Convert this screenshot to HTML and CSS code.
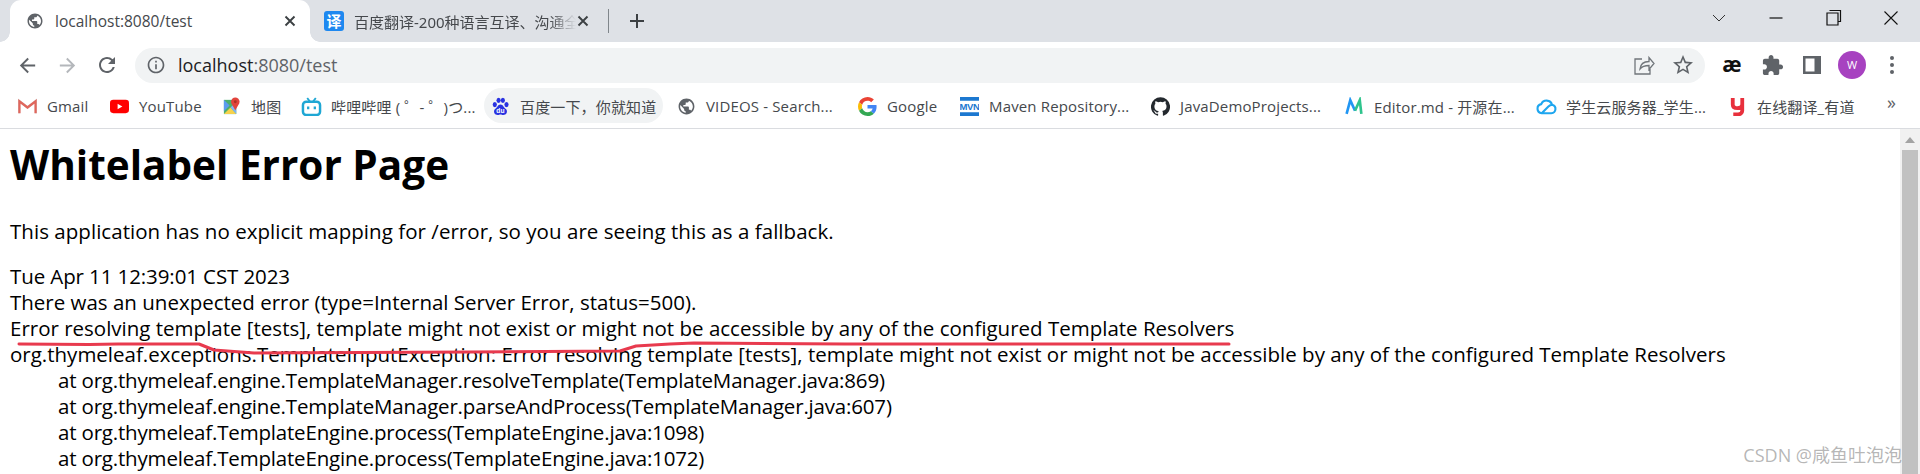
FILE: index.html
```html
<!DOCTYPE html>
<html lang="en">
<head>
<meta charset="utf-8">
<title>localhost:8080/test</title>
<link rel="stylesheet" href="styles.css">
</head>
<body>
<svg class="defs" width="0" height="0" aria-hidden="true">
  <symbol id="globe" viewBox="0 0 24 24"><path d="M12 2C6.48 2 2 6.48 2 12s4.48 10 10 10 10-4.48 10-10S17.52 2 12 2zm-1 17.93c-3.95-.49-7-3.85-7-7.93 0-.62.08-1.21.21-1.79L9 15v1c0 1.1.9 2 2 2v1.93zm6.9-2.54c-.26-.81-1-1.39-1.9-1.39h-1v-3c0-.55-.45-1-1-1H8v-2h2c.55 0 1-.45 1-1V7h2c1.1 0 2-.9 2-2v-.41c2.93 1.19 5 4.06 5 7.41 0 2.08-.8 3.97-2.1 5.39z"/></symbol>
  <symbol id="x" viewBox="0 0 14 14"><path d="M2.5 2.5l9 9M11.500 2.500l-9 9" fill="none" stroke="#3c4043" stroke-width="1.900"/></symbol>
</svg>
<div class="browser">
  <header class="tabstrip">
    <div class="tab tab-active">
      <svg class="fav-globe"><use href="#globe"/></svg>
      <span class="tab-title">localhost:8080/test</span>
      <svg class="tab-x"><use href="#x"/></svg>
    </div>
    <div class="tab tab-idle">
      <span class="fav-yi">译</span>
      <span class="tab-title tab-fade">百度翻译-200种语言互译、沟通全世界！</span>
      <svg class="tab-x"><use href="#x"/></svg>
    </div>
    <span class="tab-sep"></span>
    <svg class="tab-plus" viewBox="0 0 16 16"><path d="M8 1v14M1 8h14" stroke="#3c4043" stroke-width="2" fill="none"/></svg>
    <div class="caption">
      <span class="cap-btn"><svg width="16" height="16" viewBox="0 0 16 16"><path d="M2 5l6 6 6-6" fill="none" stroke="#333" stroke-width="1"/></svg></span>
      <span class="cap-btn"><svg width="16" height="16" viewBox="0 0 16 16"><path d="M1.500 8h13" stroke="#111" stroke-width="1.200"/></svg></span>
      <span class="cap-btn"><svg width="16" height="16" viewBox="0 0 16 16"><path d="M3.500 .5h11v11h-2M1 3h11v12H1z" fill="none" stroke="#111" stroke-width="1.200"/></svg></span>
      <span class="cap-btn"><svg width="16" height="16" viewBox="0 0 16 16"><path d="M1.500 1.500l13 13M14.500 1.500l-13 13" stroke="#111" stroke-width="1.100"/></svg></span>
    </div>
  </header>

  <nav class="toolbar">
    <span class="slot"><svg class="ico22 grey" viewBox="0 0 24 24"><path d="M20 11H7.830l5.590-5.590L12 4l-8 8 8 8 1.410-1.410L7.830 13H20v-2z"/></svg></span>
    <span class="slot"><svg class="ico22 pale" viewBox="0 0 24 24"><path d="M4 11h12.170l-5.590-5.590L12 4l8 8-8 8-1.410-1.410L16.170 13H4v-2z"/></svg></span>
    <span class="slot"><svg class="ico24 grey" viewBox="0 0 24 24"><path d="M17.650 6.350A7.958 7.958 0 0 0 12 4c-4.420 0-7.990 3.580-7.990 8s3.570 8 7.990 8c3.730 0 6.840-2.550 7.730-6h-2.080A5.990 5.990 0 0 1 12 18c-3.310 0-6-2.690-6-6s2.690-6 6-6c1.660 0 3.140.69 4.220 1.780L13 11h7V4l-2.350 2.350z"/></svg></span>
    <div class="omnibox">
      <svg class="ico18 grey" viewBox="0 0 24 24"><path d="M11 7h2v2h-2zm0 4h2v6h-2zm1-9C6.480 2 2 6.480 2 12s4.480 10 10 10 10-4.480 10-10S17.520 2 12 2zm0 18c-4.410 0-8-3.590-8-8s3.590-8 8-8 8 3.590 8 8-3.590 8-8 8z"/></svg>
      <span class="url"><span class="url-host">localhost</span>:8080/test</span>
      <span class="omni-right">
        <span class="slot-s"><svg width="22" height="22" viewBox="0 0 22 22"><path d="M9 5H2v15h15v-6M7 15c.5-5 4-7.500 9-7.500V3.500l5 6-5 6v-4c-4 0-7 1-9 3.500z" fill="none" stroke="#70757a" stroke-width="1.300"/></svg></span>
        <span class="slot-s"><svg class="ico24 grey" viewBox="0 0 24 24"><path d="M22 9.240l-7.190-.62L12 2 9.190 8.630 2 9.240l5.460 4.730L5.820 21 12 17.270 18.180 21l-1.630-7.030L22 9.240zM12 15.400l-3.760 2.270 1-4.280-3.320-2.880 4.380-.38L12 6.100l1.710 4.040 4.380.38-3.320 2.880 1 4.280L12 15.400z"/></svg></span>
      </span>
    </div>
    <span class="slot ae">æ</span>
    <span class="slot"><svg class="ico22 grey" viewBox="0 0 24 24"><path d="M20.500 11H19V7c0-1.100-.9-2-2-2h-4V3.500C13 2.120 11.880 1 10.500 1S8 2.120 8 3.500V5H4c-1.100 0-1.990.9-1.990 2v3.800H3.500c1.490 0 2.700 1.210 2.700 2.700s-1.210 2.700-2.700 2.700H2V20c0 1.100.9 2 2 2h3.800v-1.500c0-1.490 1.210-2.700 2.700-2.700 1.490 0 2.700 1.210 2.700 2.700V22H17c1.100 0 2-.9 2-2v-4h1.500c1.380 0 2.500-1.120 2.500-2.500S21.880 11 20.500 11z"/></svg></span>
    <span class="slot"><svg width="18" height="18" viewBox="0 0 18 18"><path fill="#5f6368" d="M0 0h18v18H0z"/><path fill="#fff" d="M2.500 2.500h9v13h-9z"/></svg></span>
    <span class="slot"><span class="avatar">W</span></span>
    <span class="slot"><svg width="6" height="20" viewBox="0 0 6 20"><circle cx="3" cy="3" r="2" fill="#5f6368"/><circle cx="3" cy="10" r="2" fill="#5f6368"/><circle cx="3" cy="17" r="2" fill="#5f6368"/></svg></span>
  </nav>

  <nav class="bookmarks">
    <a class="bm"><svg class="bm-ico" viewBox="0 0 20 16"><path d="M1 15V2l9 7 9-7v13" fill="none" stroke="#d6d6d6" stroke-width="2.600"/><path d="M1.500 15V2.500L10 9l8.500-6.500V15" fill="none" stroke="#e0665c" stroke-width="2.400"/></svg>Gmail</a>
    <a class="bm"><svg class="bm-ico" viewBox="0 0 20 14"><rect width="20" height="14" rx="3.500" fill="#f00"/><path d="M8 4l5 3-5 3z" fill="#fff"/></svg>YouTube</a>
    <a class="bm"><svg class="bm-ico" viewBox="0 0 18 20"><path d="M1 3h13v15H1z" fill="#4caf6e"/><path d="M1 18l7-7 6 7z" fill="#f6d24c"/><path d="M1 3l6 6-6 6z" fill="#5b9bf0"/><path d="M8 11l6-6v13z" fill="#7fb4f5"/><circle cx="13" cy="5" r="4.500" fill="#e2433b"/><path d="M9.500 8l3.500 6 3.500-6z" fill="#e2433b"/><circle cx="13" cy="5" r="1.500" fill="#a32"/></svg>地图</a>
    <a class="bm"><svg class="bm-ico bm-ico-wide" viewBox="0 0 21 20"><path d="M6 1l3 4M15 1l-3 4" stroke="#1fa7d4" stroke-width="2"/><rect x="1.500" y="5" width="18" height="14" rx="3.500" fill="none" stroke="#1fa7d4" stroke-width="2.600"/><path d="M7 10v3M14 10v3" stroke="#1fa7d4" stroke-width="2.400"/></svg>哔哩哔哩 ( ゜- ゜)つ...</a>
    <a class="bm bm-hover"><svg class="bm-ico" viewBox="0 0 20 20"><g fill="#2932e1"><ellipse cx="4" cy="8" rx="2.200" ry="2.800"/><ellipse cx="8" cy="3.500" rx="2.200" ry="2.800"/><ellipse cx="12.500" cy="3.500" rx="2.200" ry="2.800"/><ellipse cx="16.300" cy="8" rx="2.200" ry="2.800"/><path d="M10 8c3 0 3 3 6 5 2 3 0 6-3 6-1.500 0-2-.5-3-.5s-1.500.5-3 .5c-3 0-5-3-3-6 3-2 3-5 6-5z"/></g><text class="du" x="10" y="17">du</text></svg>百度一下，你就知道</a>
    <a class="bm"><svg class="bm-ico bm-globe"><use href="#globe"/></svg>VIDEOS - Search...</a>
    <a class="bm"><svg class="bm-ico" viewBox="0 0 48 48"><path fill="#EA4335" d="M24 9.500c3.540 0 6.710 1.220 9.210 3.600l6.850-6.850C35.900 2.380 30.470 0 24 0 14.620 0 6.510 5.380 2.560 13.220l7.980 6.190C12.430 13.720 17.740 9.500 24 9.500z"/><path fill="#4285F4" d="M46.980 24.550c0-1.570-.15-3.090-.38-4.550H24v9.020h12.940c-.58 2.960-2.260 5.480-4.780 7.180l7.730 6c4.510-4.180 7.090-10.360 7.090-17.650z"/><path fill="#FBBC05" d="M10.530 28.590c-.48-1.450-.76-2.990-.76-4.590s.27-3.140.76-4.590l-7.980-6.190C.92 16.460 0 20.120 0 24c0 3.880.92 7.540 2.560 10.780l7.970-6.190z"/><path fill="#34A853" d="M24 48c6.480 0 11.930-2.130 15.890-5.810l-7.730-6c-2.150 1.450-4.920 2.300-8.160 2.300-6.260 0-11.570-4.220-13.470-9.910l-7.980 6.190C6.510 42.620 14.620 48 24 48z"/></svg>Google</a>
    <a class="bm"><svg class="bm-ico" viewBox="0 0 18 18"><path d="M0 0h18v3.500H0zM0 14.500h18V18H0z" fill="#1c78d0"/><text class="mvn" x="9" y="12.300">MVN</text></svg>Maven Repository...</a>
    <a class="bm"><svg class="bm-ico" viewBox="0 0 24 24"><path fill="#24292e" d="M12 .3a12 12 0 0 0-3.800 23.400c.6.1.8-.3.8-.6v-2c-3.300.7-4-1.600-4-1.600-.6-1.400-1.400-1.800-1.400-1.800-1-.7.1-.7.1-.7 1.200 0 1.900 1.200 1.900 1.200 1 1.800 2.800 1.300 3.500 1 0-.8.4-1.300.7-1.600-2.700-.3-5.500-1.300-5.500-6 0-1.200.5-2.300 1.300-3.100-.2-.4-.6-1.600 0-3.200 0 0 1-.3 3.400 1.200a11.500 11.500 0 0 1 6 0c2.300-1.500 3.300-1.200 3.300-1.200.6 1.600.2 2.800 0 3.200.9.8 1.300 1.900 1.300 3.200 0 4.600-2.800 5.600-5.500 5.900.5.4.9 1 .9 2.200v3.300c0 .3.1.7.8.6A12 12 0 0 0 12 .3"/></svg>JavaDemoProjects...</a>
    <a class="bm"><svg class="bm-ico" viewBox="0 0 18 18"><path d="M1.500 16L5 3l4.500 10" fill="none" stroke="#2196f3" stroke-width="2.500"/><path d="M9.500 13L14 3l1.500 13" fill="none" stroke="#2fc48d" stroke-width="2.500"/></svg>Editor.md - 开源在...</a>
    <a class="bm"><svg class="bm-ico bm-ico-wide" viewBox="0 0 22 18"><path d="M6 16h10a4.500 4.500 0 0 0 .8-8.900A6 6 0 0 0 5.500 6.500 4.800 4.800 0 0 0 6 16zM6 16l7-7c1-1 2-1.800 3.800-1.900" fill="none" stroke="#1ea6ef" stroke-width="2.200"/></svg>学生云服务器_学生...</a>
    <a class="bm"><svg class="bm-ico" viewBox="0 0 14 18"><path d="M2.500 1v6c0 3 2 3.500 4.500 3.500S11.500 10 11.500 7V1M11.500 7v6c0 2.500-2 3.500-4 3.500H3" fill="none" stroke="#e8303c" stroke-width="3.600"/></svg>在线翻译_有道</a>
    <span class="bm-more">»</span>
  </nav>

  <div class="viewport">
    <main class="page">
      <h1 class="title">Whitelabel Error Page</h1>
      <p class="fallback">This application has no explicit mapping for /error, so you are seeing this as a fallback.</p>
      <div class="when">Tue Apr 11 12:39:01 CST 2023</div>
      <div>There was an unexpected error (type=Internal Server Error, status=500).</div>
      <div>Error resolving template [tests], template might not exist or might not be accessible by any of the configured Template Resolvers</div>
      <div>org.thymeleaf.exceptions.TemplateInputException: Error resolving template [tests], template might not exist or might not be accessible by any of the configured Template Resolvers</div>
      <div class="frame">at org.thymeleaf.engine.TemplateManager.resolveTemplate(TemplateManager.java:869)</div>
      <div class="frame">at org.thymeleaf.engine.TemplateManager.parseAndProcess(TemplateManager.java:607)</div>
      <div class="frame">at org.thymeleaf.TemplateEngine.process(TemplateEngine.java:1098)</div>
      <div class="frame">at org.thymeleaf.TemplateEngine.process(TemplateEngine.java:1072)</div>
      <svg class="scribble" viewBox="0 0 1240 30" width="1240" height="30"><path d="M19 4 L89 4.500 L118 4 L199 4 L214 10 L254 13 L469 12 L620 11 L636 6 L670 4 L694 3 L845 4 L1229 4" fill="none" stroke="#e83a4e" stroke-width="3" stroke-linecap="round" stroke-linejoin="round"/></svg>
      <span class="watermark">CSDN @咸鱼吐泡泡</span>
    </main>
    <div class="scrollbar">
      <span class="sb-arrow"></span>
      <span class="sb-thumb"></span>
    </div>
  </div>
</div>
</body>
</html>
```

FILE: styles.css
```css
* { box-sizing: border-box; }
html, body { margin: 0; height: 100%; overflow: hidden; background: #fff; }
.defs { position: absolute; }
.browser {
  height: 474px;
  display: flex;
  flex-direction: column;
  font-family: "Open Sans", "Noto Sans CJK SC", sans-serif;
}

/* tab strip */
.tabstrip { height: 42px; flex: none; display: flex; align-items: center; padding-left: 10px; background: #dee1e6; }
.tab { height: 42px; display: flex; align-items: center; position: relative; font-size: 15.500px; color: #45484c; }
.tab-active { width: 300px; padding: 0 13px 0 16px; background: #fff; border-radius: 11px 11px 0 0; }
.tab-active::before, .tab-active::after {
  content: ""; position: absolute; bottom: 0; width: 10px; height: 10px;
}
.tab-active::before { left: -10px; background: radial-gradient(circle at 0 0, #dee1e6 9.500px, #fff 10px); }
.tab-active::after { right: -10px; background: radial-gradient(circle at 100% 0, #dee1e6 9.500px, #fff 10px); }
.fav-globe { width: 18px; height: 18px; flex: none; fill: #5f6368; margin-right: 11px; }
.tab-title { flex: 1; white-space: nowrap; overflow: hidden; }
.tab-x { width: 14px; height: 14px; flex: none; }
.tab-idle { width: 287px; padding: 0 7px 0 14px; }
.fav-yi { width: 20px; height: 20px; flex: none; margin-right: 10px; border-radius: 3px; background: #1e88f0; color: #fff; font: 700 15px/20px "Noto Sans CJK SC", sans-serif; text-align: center; }
.tab-fade { font-family: "Noto Sans", "Noto Sans CJK SC", sans-serif; font-size: 15px; -webkit-mask-image: linear-gradient(90deg, #000 88%, transparent); mask-image: linear-gradient(90deg, #000 88%, transparent); }
.tab-sep { width: 1px; height: 24px; margin-left: 11px; background: #80868b; flex: none; }
.tab-plus { width: 16px; height: 16px; margin-left: 20px; flex: none; }
.caption { margin-left: auto; display: flex; align-self: flex-start; }
.cap-btn { width: 57.500px; height: 36px; display: flex; align-items: center; justify-content: center; }

/* toolbar */
.toolbar { height: 46px; flex: none; display: flex; align-items: center; padding: 0 8px 0 7px; background: #fff; }
.slot { width: 40px; height: 35px; flex: none; display: flex; align-items: center; justify-content: center; }
.grey { fill: #5f6368; }
.pale { fill: #b4b7bb; }
.ico18 { width: 20px; height: 20px; flex: none; }
.ico22 { width: 23px; height: 23px; }
.ico24 { width: 24px; height: 24px; }
.omnibox { flex: 1; height: 35px; margin: 0 7px 0 8px; padding: 0 3px 0 11px; display: flex; align-items: center; background: #f1f3f4; border-radius: 18px; }
.url { margin-left: 12px; font-size: 18px; color: #5f6368; }
.url-host { color: #202124; }
.omni-right { margin-left: auto; display: flex; }
.slot-s { width: 39px; height: 35px; display: flex; align-items: center; justify-content: center; }
.ae { font: 700 21px "Noto Sans", sans-serif; color: #111; padding-bottom: 3px; }
.avatar { width: 28px; height: 28px; border-radius: 50%; background: #a742c0; color: #fff; font-size: 11px; line-height: 28px; text-align: center; }

/* bookmarks */
.bookmarks {
  height: 41px; flex: none;
  display: grid;
  grid-template-columns: 92px 112px 79px 190px 186px 181px 102px 191px 194px 191px 192px 157px 1fr;
  padding-left: 11px;
  border-bottom: 1px solid #dadce0;
  background: #fff;
}
.bm { height: 35px; padding: 1px 7px 0; display: flex; align-items: center; justify-self: start; white-space: nowrap; font-size: 15px; letter-spacing: .15px; color: #45484c; }
.bm-hover { background: #f1f3f4; border-radius: 18px; }
.bm-ico { width: 19px; height: 19px; margin-right: 10px; flex: none; }
.bm-ico-wide { width: 21px; margin-right: 9px; }
.bm-globe { fill: #5f6368; }
.bm-more { font-size: 18px; color: #5f6368; padding: 2px 0 0 9px; }
.du { font: 700 7px "Liberation Sans", sans-serif; fill: #fff; text-anchor: middle; }
.mvn { font: 700 9px "Liberation Sans", sans-serif; letter-spacing: -.3px; fill: #1c78d0; text-anchor: middle; }

/* page */
.viewport { flex: 1; min-height: 0; display: flex; overflow: hidden; }
.page { flex: 1; min-width: 0; position: relative; padding: 9px 0 0 10px; font-size: 20.500px; line-height: 26px; color: #000; white-space: nowrap; }
.title { margin: 0 0 26px; font-size: 40.500px; line-height: 54px; font-weight: 700; }
.fallback { margin: 0 0 19px; letter-spacing: .04px; }
.when { letter-spacing: -.1px; }
.frame { padding-left: 48px; letter-spacing: -.18px; }
.scribble { position: absolute; left: 0; top: 211px; }
.watermark { position: absolute; right: -2px; top: 314px; font-size: 18px; line-height: 24px; color: rgba(120, 120, 120, .55); }
.scrollbar { width: 20px; flex: none; display: flex; flex-direction: column; align-items: center; background: #f1f1f1; }
.sb-arrow { margin-top: 8px; width: 0; height: 0; border: 5px solid transparent; border-top: 0; border-bottom: 6px solid #a3a3a3; }
.sb-thumb { margin-top: 7px; width: 16px; flex: 1; background: #c1c1c1; }
```
